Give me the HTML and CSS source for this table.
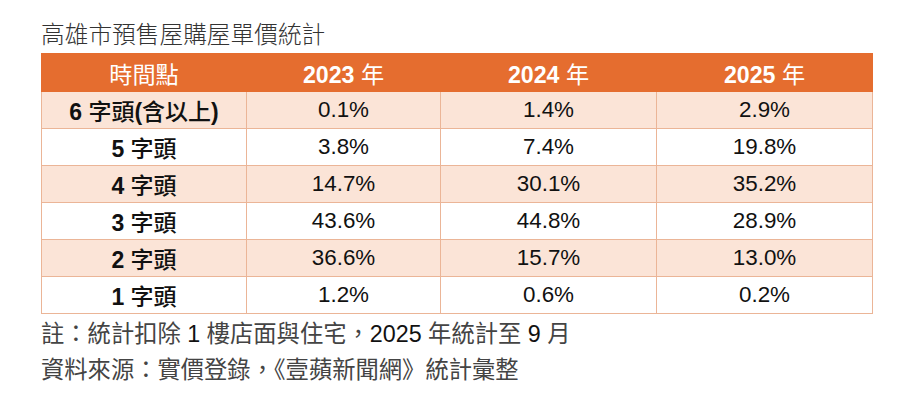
FILE: index.html
```html
<!DOCTYPE html>
<html lang="zh-Hant">
<head>
<meta charset="utf-8">
<title>高雄市預售屋購屋單價統計</title>
<link rel="stylesheet" href="styles.css">
</head>
<body>
<main class="page">
  <h1 class="title">高雄市預售屋購屋單價統計</h1>
  <table class="stats">
    <colgroup>
      <col class="c1"><col class="c2"><col class="c3"><col class="c4">
    </colgroup>
    <thead>
      <tr>
        <th>時間點</th>
        <th><b>2023</b> 年</th>
        <th><b>2024</b> 年</th>
        <th><b>2025</b> 年</th>
      </tr>
    </thead>
    <tbody>
      <tr class="alt"><td class="label"><b>6</b> 字頭<b>(</b>含以上<b>)</b></td><td>0.1%</td><td>1.4%</td><td>2.9%</td></tr>
      <tr><td class="label"><b>5</b> 字頭</td><td>3.8%</td><td>7.4%</td><td>19.8%</td></tr>
      <tr class="alt"><td class="label"><b>4</b> 字頭</td><td>14.7%</td><td>30.1%</td><td>35.2%</td></tr>
      <tr><td class="label"><b>3</b> 字頭</td><td>43.6%</td><td>44.8%</td><td>28.9%</td></tr>
      <tr class="alt"><td class="label"><b>2</b> 字頭</td><td>36.6%</td><td>15.7%</td><td>13.0%</td></tr>
      <tr><td class="label"><b>1</b> 字頭</td><td>1.2%</td><td>0.6%</td><td>0.2%</td></tr>
    </tbody>
  </table>
  <p class="note">註：統計扣除 <span class="num">1</span> 樓店面與住宅，<span class="num">2025</span> 年統計至 <span class="num">9</span> 月</p>
  <p class="note">資料來源：實價登錄，《壹蘋新聞網》統計彙整</p>
</main>
</body>
</html>
```
FILE: styles.css
```css
html, body {
  margin: 0;
  padding: 0;
  background: #ffffff;
}

body {
  font-family: "Liberation Sans", "Noto Sans CJK TC", sans-serif;
  color: #111;
}

.page {
  padding: 21px 0 0 41px;
}

.title {
  margin: 0 0 4px 0;
  font-size: 23.7px;
  line-height: 28px;
  font-weight: 300;
  color: #333;
}

.stats {
  border-collapse: collapse;
  table-layout: fixed;
  width: 831px;
}

.c1 { width: 205px; }
.c2 { width: 194px; }
.c3 { width: 216px; }
.c4 { width: 216px; }

.stats th {
  height: 37px;
  padding: 0;
  background: #e56d2f;
  color: #fff;
  font-size: 23.2px;
  font-weight: normal;
  text-align: center;
  border: 1px solid #e56d2f;
}

.stats th b {
  font-weight: bold;
}

.stats td {
  height: 36px;
  padding: 0;
  text-align: center;
  font-size: 22.4px;
  color: #111;
  border: 1px solid #ebb597;
}

.stats tr.alt td {
  background: #fbe4d7;
}

.stats td.label {
  font-size: 23px;
  font-weight: 500;
}

.stats td.label b {
  font-weight: bold;
}

.note {
  margin: 0;
  font-size: 23.3px;
  line-height: 36px;
  color: #444;
}

.note:first-of-type {
  margin-top: 2px;
}

.note .num {
  color: #111;
}
```
